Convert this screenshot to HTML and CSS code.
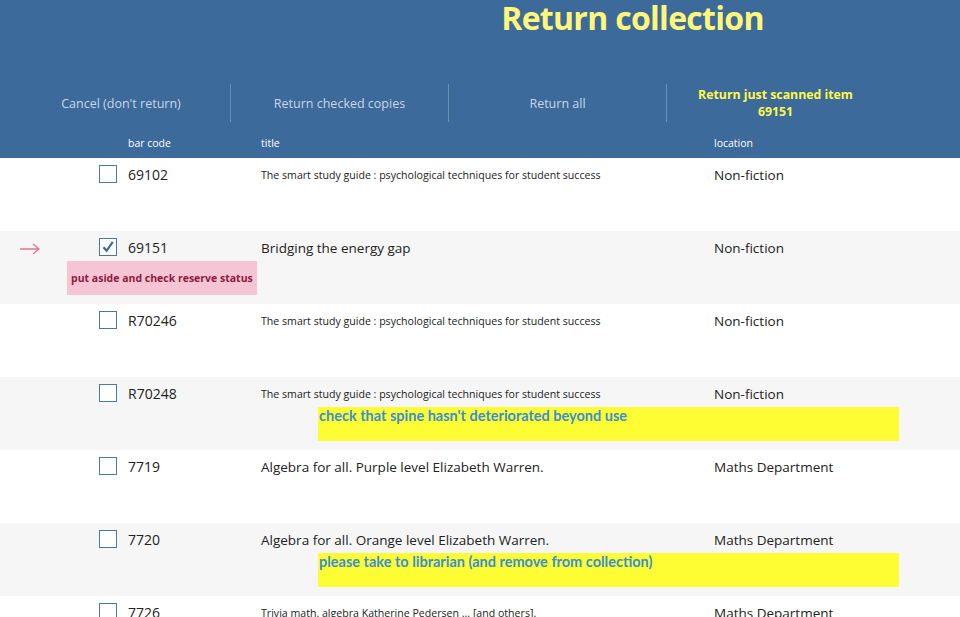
FILE: index.html
```html
<!DOCTYPE html>
<html>
<head>
<meta charset="utf-8">
<link rel="stylesheet" href="styles.css">
</head>
<body>
<header class="top">
  <h1 class="title">Return collection</h1>
  <nav class="actions">
    <div class="action">Cancel (don't return)</div>
    <div class="action">Return checked copies</div>
    <div class="action">Return all</div>
    <div class="action action-hot">Return just scanned item<br>69151</div>
  </nav>
  <div class="row colhead">
    <span></span><span></span>
    <span class="h-code">bar code</span>
    <span class="h-title">title</span>
    <span class="h-loc">location</span>
  </div>
</header>
<main class="list">
  <div class="row item">
    <span class="c-mark"></span>
    <span class="box"></span>
    <span class="c-code">69102</span>
    <span class="c-title small">The smart study guide : psychological techniques for student success</span>
    <span class="c-loc">Non-fiction</span>
  </div>
  <div class="row item alt">
    <span class="c-mark"><svg width="22" height="12" viewBox="0 0 22 12"><path d="M1 6H20M14 1L20 6L14 11" fill="none" stroke="#d9798f" stroke-width="1.3"/></svg></span>
    <span class="box checked"><svg width="16" height="16" viewBox="0 0 16 16"><path d="M3.5 8.2L6.6 11.8L12.8 2.8" fill="none" stroke="#3c6a9a" stroke-width="2.2"/></svg></span>
    <span class="c-code">69151</span>
    <span class="c-title">Bridging the energy gap</span>
    <span class="c-loc">Non-fiction</span>
    <div class="note note-pink">put aside and check reserve status</div>
  </div>
  <div class="row item">
    <span class="c-mark"></span>
    <span class="box"></span>
    <span class="c-code">R70246</span>
    <span class="c-title small">The smart study guide : psychological techniques for student success</span>
    <span class="c-loc">Non-fiction</span>
  </div>
  <div class="row item alt">
    <span class="c-mark"></span>
    <span class="box"></span>
    <span class="c-code">R70248</span>
    <span class="c-title small">The smart study guide : psychological techniques for student success</span>
    <span class="c-loc">Non-fiction</span>
    <div class="note note-yellow">check that spine hasn't deteriorated beyond use</div>
  </div>
  <div class="row item">
    <span class="c-mark"></span>
    <span class="box"></span>
    <span class="c-code">7719</span>
    <span class="c-title">Algebra for all. Purple level Elizabeth Warren.</span>
    <span class="c-loc">Maths Department</span>
  </div>
  <div class="row item alt">
    <span class="c-mark"></span>
    <span class="box"></span>
    <span class="c-code">7720</span>
    <span class="c-title">Algebra for all. Orange level Elizabeth Warren.</span>
    <span class="c-loc">Maths Department</span>
    <div class="note note-yellow">please take to librarian (and remove from collection)</div>
  </div>
  <div class="row item">
    <span class="c-mark"></span>
    <span class="box"></span>
    <span class="c-code">7726</span>
    <span class="c-title small">Trivia math. algebra Katherine Pedersen ... [and others].</span>
    <span class="c-loc">Maths Department</span>
  </div>
</main>
</body>
</html>
```
FILE: styles.css
```css
* { box-sizing: border-box; }
html, body { margin: 0; padding: 0; }
body {
  font-family: "Open Sans", "DejaVu Sans", sans-serif;
  color: #222;
  background: #fff;
  width: 960px;
  overflow: hidden;
}
.top {
  background: #3c6a9a;
  height: 158px;
}
.title {
  margin: 0 0 0 305px;
  font-size: 32px;
  line-height: 36px;
  font-weight: 700;
  color: #fff67a;
  text-align: center;
  letter-spacing: -0.7px;
}
.actions {
  display: grid;
  grid-template-columns: repeat(4, 218px);
  margin: 48px 0 0 12px;
  height: 38px;
}
.action {
  display: flex;
  align-items: center;
  justify-content: center;
  text-align: center;
  font-size: 12.5px;
  color: #cad6e4;
}
.action + .action { border-left: 1px solid #6990b6; }
.action-hot {
  color: #fff84a;
  font-weight: 700;
  font-size: 12.3px;
  line-height: 17px;
}
.row {
  display: grid;
  grid-template-columns: 99px 29px 133px 453px 1fr;
  align-items: center;
}
.colhead {
  margin-top: 14px;
  font-size: 10.5px;
  line-height: 15px;
  color: #fff;
}
.item {
  height: 73px;
  padding-top: 7px;
  align-content: start;
  font-size: 13.5px;
  line-height: 20px;
}
.alt { background: #f6f6f6; }
.c-mark { display: flex; justify-content: flex-end; padding-right: 58px; padding-top: 1px; }
.c-mark svg { display: block; }
.box {
  width: 18px;
  height: 18px;
  border: 1.5px solid #4b77a4;
  background: #fff;
  margin-top: -2px;
  display: flex;
  align-items: center;
  justify-content: center;
}
.box svg { display: block; }
.c-code { font-size: 14px; }
.c-title.small { font-size: 10.6px; }
.note {
  grid-column: 1 / -1;
  height: 34px;
}
.note-pink {
  margin: 3px 0 0 67px;
  width: 190px;
  background: #f5c5d6;
  color: #8c1b3e;
  font-weight: 700;
  font-size: 10.5px;
  line-height: 34px;
  padding-left: 4px;
  white-space: nowrap;
}
.note-yellow {
  margin: 3px 0 0 318px;
  width: 581px;
  background: #fefd33;
  color: #3a8fd2;
  font-family: "Lato", "Open Sans", sans-serif;
  font-weight: 700;
  font-size: 14.5px;
  line-height: 18px;
  padding-left: 1px;
}
```
